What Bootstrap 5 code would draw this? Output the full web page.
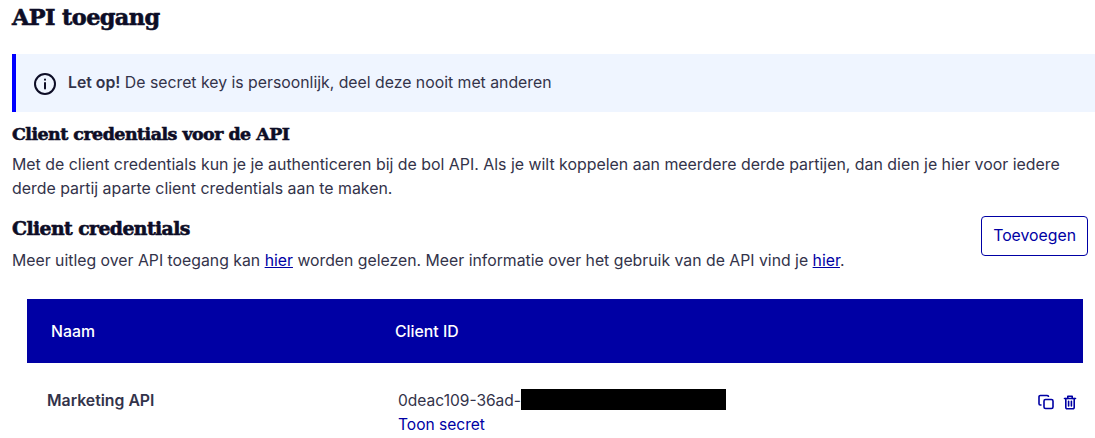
<!DOCTYPE html>
<html lang="nl">
<head>
<meta charset="utf-8">
<title>API toegang</title>
<link href="https://cdn.jsdelivr.net/npm/bootstrap@5.3.0/dist/css/bootstrap.min.css" rel="stylesheet">
<style>
html,body{height:438px;overflow:hidden}
body{font-family:Inter,"Liberation Sans",sans-serif;font-size:16px;line-height:24px;color:#33334a;background:#fff;padding-left:12px}
.ttl-main,.ttl-sub,.ttl-sub-lg{font-family:"DejaVu Serif",serif;font-weight:700;color:#0d0d26;margin:0;-webkit-text-stroke:.6px #0d0d26}
.ttl-main{font-size:22.4px;line-height:36px;letter-spacing:-.6px;margin-top:-1px}
.ttl-sub{font-size:17.4px;line-height:24px;letter-spacing:-.5px}
.ttl-sub-lg{font-size:18.8px;line-height:24px;letter-spacing:-.55px}
.note-box{margin-top:19px;height:58px;background:#eff5ff;border-left:4px solid #0000ff;padding-left:17px;font-size:15.8px}
.note-box b{font-weight:600}
.note-txt{margin-left:3px}
.note-ico{margin-top:2px}
.body-txt{font-size:15.9px;line-height:24px;margin:0}
.sec-two .body-txt{font-size:15.8px;margin-top:9px}
.body-txt a,.data-link{color:#0000a4}
.sec-one{margin-top:10px}
.sec-one .body-txt{margin-top:7px}
.sec-two{margin-top:15px;padding-right:7px}
.btn-add{--bs-btn-color:#0000a4;--bs-btn-border-color:#0000a4;--bs-btn-hover-color:#0000a4;--bs-btn-hover-bg:#eff5ff;--bs-btn-hover-border-color:#0000a4;--bs-btn-font-size:15.8px;--bs-btn-padding-x:11px;--bs-btn-padding-y:7px;--bs-btn-border-radius:4px;height:40px}
.tbl-wrap{margin:26px 12px 0 15px}
.head-row{height:64px;background:#0000a4;color:#fff;font-size:15.8px;font-weight:500;padding-top:2px}
.col-name{width:368px;padding-left:24px}
.col-id{flex:1}
.body-row{padding-top:26px;font-size:15.55px}
.body-row .col-name{padding-left:20px;font-weight:600;width:371px;font-size:15.8px}
.redact{display:inline-block;width:205px;height:21px;background:#000;vertical-align:top}
.data-link{text-decoration:none;display:block}
.act-icons{padding-right:5px;padding-top:5px;color:#0000a4}
</style>
</head>
<body>
<h1 class="ttl-main">API toegang</h1>
<div class="note-box d-flex align-items-center gap-2">
  <svg class="note-ico" width="24" height="24" viewBox="0 0 24 24" fill="none" stroke="#0d0d26" stroke-width="2" stroke-linecap="round"><circle cx="12" cy="12" r="10"/><path d="M12 11v5.5"/><path d="M12 7.6v.1"/></svg>
  <span class="note-txt"><b>Let op!</b> De secret key is persoonlijk, deel deze nooit met anderen</span>
</div>
<section class="sec-one">
  <h2 class="ttl-sub">Client credentials voor de API</h2>
  <p class="body-txt">Met de client credentials kun je je authenticeren bij de bol API. Als je wilt koppelen aan meerdere derde partijen, dan dien je hier voor iedere derde partij aparte client credentials aan te maken.</p>
</section>
<section class="sec-two d-flex justify-content-between align-items-start">
  <div>
    <h2 class="ttl-sub-lg">Client credentials</h2>
    <p class="body-txt">Meer uitleg over API toegang kan <a href="#">hier</a> worden gelezen. Meer informatie over het gebruik van de API vind je <a href="#">hier</a>.</p>
  </div>
  <button type="button" class="btn btn-add bg-white">Toevoegen</button>
</section>
<div class="tbl-wrap">
  <div class="head-row d-flex align-items-center">
    <div class="col-name">Naam</div>
    <div class="col-id">Client ID</div>
  </div>
  <div class="body-row d-flex">
    <div class="col-name">Marketing API</div>
    <div class="col-id">
      <div>0deac109-36ad-<span class="redact"></span></div>
      <a class="data-link" href="#">Toon secret</a>
    </div>
    <div class="act-icons d-flex gap-2">
      <svg width="16" height="16" viewBox="0 0 16 16" fill="none" stroke="currentColor" stroke-width="1.6" stroke-linejoin="round"><rect x="6" y="5.5" width="9" height="9" rx="1.6"/><path d="M10.5 3V2.8A1.3 1.3 0 0 0 9.2 1.5H2.3A1.3 1.3 0 0 0 1 2.8v6.9A1.3 1.3 0 0 0 2.3 11H3.5"/></svg>
      <svg width="16" height="16" viewBox="0 0 16 16" fill="none" stroke="currentColor" stroke-width="1.6" stroke-linecap="round" stroke-linejoin="round"><path d="M2.5 4.5h11"/><path d="M5.8 4.5V2.2h4.4v2.3"/><path d="M3.8 4.5v9a1.2 1.2 0 0 0 1.2 1.2h6a1.2 1.2 0 0 0 1.2-1.2v-9"/><path d="M6.6 7.2v4.8M9.4 7.2v4.8"/></svg>
    </div>
  </div>
</div>
<script src="https://cdn.jsdelivr.net/npm/bootstrap@5.3.0/dist/js/bootstrap.bundle.min.js"></script>
</body>
</html>
